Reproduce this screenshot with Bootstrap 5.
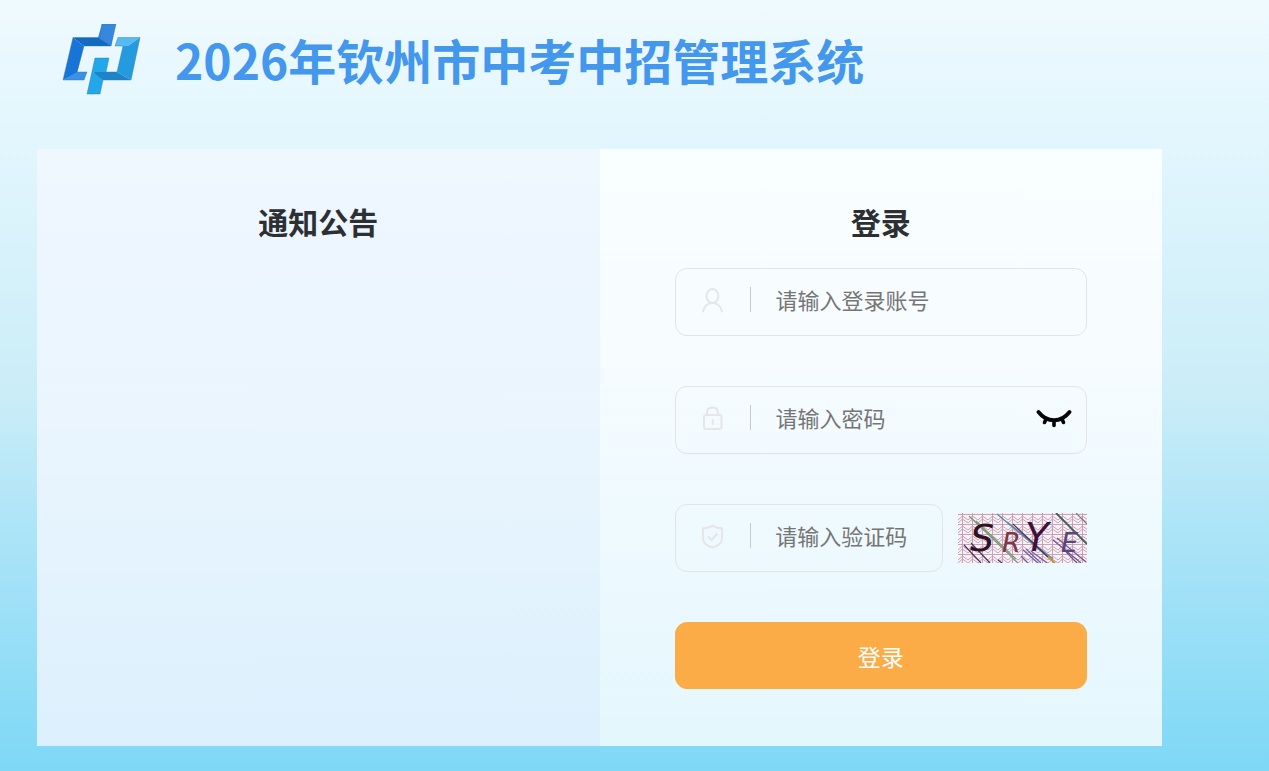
<!DOCTYPE html>
<html lang="zh-CN">
<head>
<meta charset="utf-8">
<meta name="viewport" content="width=device-width, initial-scale=1">
<title>2026年钦州市中考中招管理系统</title>
<link href="https://cdn.jsdelivr.net/npm/bootstrap@5.3.0/dist/css/bootstrap.min.css" rel="stylesheet">
<style>
  body {
    font-family: "Noto Sans CJK SC", sans-serif;
    color: #2c3033;
    background: linear-gradient(180deg, #effaff 0, #e2f6fd 18%, #cbedf8 51%, #ace4f7 69%, #7ed8f6 100%) no-repeat;
  }
  .site-header { padding: 24px 62px; height: 149px; gap: 34px; }
  .site-title { font-size: 48px; line-height: 70px; color: #4397ed; }
  .login-shell { margin: 0 107px 25px 37px; }
  .notice-panel { background: linear-gradient(180deg, #eff7ff, #eaf5fe 45%, #dcf0fd); }
  .login-panel { background: linear-gradient(180deg, #f9feff, #f6fcff 35%, #ecf9fe 72%, #e4f7fd); }
  .panel-pad { padding: 50px 75px 57px; }
  .panel-title { font-size: 30px; line-height: 44px; margin-bottom: 25px; }
  .login-form { gap: 50px; }
  .field-box {
    height: 68px;
    padding: 0 14px 0 24px;
    border: 1px solid #e4e4e4;
    border-radius: 12px;
  }
  .field-box .field-icon { width: 25px; height: 25px; margin-bottom: 4px; }
  .field-divider { width: 1px; height: 25px; margin: 0 25px; margin-bottom: 5px; background: #c9c9c9; }
  .field-input { font-size: 22px; line-height: 34px; color: #333; min-width: 0; outline: 0; margin-bottom: 6px; }
  .field-input::placeholder { color: #757575; opacity: 1; }
  .field-box:focus-within { border-color: #4397ed; }
  .eye-btn { margin-bottom: 4px; }
  .captcha-row { gap: 15px; }
  .captcha-btn { width: 129px; height: 50px; }
  .login-btn {
    height: 67px;
    font-size: 23px;
    line-height: 34px;
    border-radius: 12px;
    --bs-btn-color: #fff;
    --bs-btn-bg: #fbac46;
    --bs-btn-border-color: #fbac46;
    --bs-btn-hover-color: #fff;
    --bs-btn-hover-bg: #f29f34;
    --bs-btn-hover-border-color: #f29f34;
  }
</style>
</head>
<body class="min-vh-100">
<header class="site-header d-flex align-items-start">
  <svg class="flex-shrink-0" width="79" height="71" viewBox="0 0 79 71" aria-hidden="true">
    <path fill="#126bc0" d="M11 13.500H38L40 0H53L49 22H22Z"/>
    <path fill="#3588dd" d="M40 0H54L49 22L36 13.500Z"/>
    <path fill="#1874d6" d="M11 13.500L22 22L15 49L1 56Z"/>
    <path fill="#3a91e6" d="M1 56L15 48H25L22 56Z"/>
    <path fill="#55bbf2" d="M56 13.500H78L66 22H53Z"/>
    <path fill="#249bdf" d="M78 13.500L69 56L55 48L61 22H66Z"/>
    <path fill="#1d84ca" d="M31 48H55L69 56H38Z"/>
    <path fill="#22a7ea" d="M33 34H47L44 48H31L41 56L38 70H25Z"/>
    <path fill="none" stroke="#3578aa" stroke-opacity=".55" stroke-width=".8" d="M11 13.500H38L40 0H54L49 22H22L15 48H25L22 56H1ZM56 13.500H78L69 56H41L38 70H25L33 34H47L44 48H55L61 22H53Z"/>
  </svg>
  <h1 class="site-title fw-bold mb-0">2026年钦州市中考中招管理系统</h1>
</header>

<main class="login-shell">
  <div class="row g-0">
    <section class="col-6 notice-panel panel-pad">
      <h2 class="panel-title text-center fw-bold">通知公告</h2>
    </section>
    <section class="col-6 login-panel panel-pad">
      <h2 class="panel-title text-center fw-bold">登录</h2>
      <form class="login-form d-flex flex-column">
        <div class="field-box d-flex align-items-center">
          <label for="account" class="d-flex" aria-label="登录账号">
            <svg class="field-icon" viewBox="0 0 25 25" fill="none" stroke="#e4e6e7" stroke-width="2" stroke-linecap="round"><ellipse cx="12.500" cy="8" rx="6" ry="7"/><path d="M3 23.500C4 18 8 15 12.500 15S21 18 22 23.500"/></svg>
          </label>
          <span class="field-divider"></span>
          <input id="account" type="text" class="field-input flex-grow-1 border-0 bg-transparent p-0" placeholder="请输入登录账号">
        </div>
        <div class="field-box d-flex align-items-center">
          <label for="password" class="d-flex" aria-label="密码">
            <svg class="field-icon" viewBox="0 0 25 25" fill="none" stroke="#e4e6e7" stroke-width="2" stroke-linecap="round"><rect x="4" y="9" width="17.500" height="14" rx="2"/><path d="M7 9V6.500C7 3.500 9 1.500 12.500 1.500S18 3.500 18 6.500V9M12.700 14V18"/></svg>
          </label>
          <span class="field-divider"></span>
          <input id="password" type="password" class="field-input flex-grow-1 border-0 bg-transparent p-0" placeholder="请输入密码">
          <button type="button" class="eye-btn btn border-0 p-0 d-flex flex-shrink-0" aria-label="显示密码">
            <svg width="36" height="22" viewBox="0 0 36 22" fill="none" stroke="#050505" stroke-linecap="round"><path stroke-width="3.800" d="M2.500 5C11 16 25 16 33.500 5"/><path stroke-width="3.600" d="M10 12L8.500 15.500M18 14V18.500M26 12L27.500 15.500"/></svg>
          </button>
        </div>
        <div class="captcha-row d-flex align-items-center">
          <div class="field-box d-flex align-items-center flex-grow-1">
            <label for="captcha" class="d-flex" aria-label="验证码">
              <svg class="field-icon" viewBox="0 0 25 25" fill="none" stroke="#e4e6e7" stroke-width="2" stroke-linejoin="round"><path d="M12.500 1.500C10 3.500 6 4.200 3 4.200V14C3 18.500 7 22 12.500 23.500C18 22 22 18.500 22 14V4.200C19 4.200 15 3.500 12.500 1.500Z"/><path d="M8 12.500L11.500 16L17.500 9.500"/></svg>
            </label>
            <span class="field-divider"></span>
            <input id="captcha" type="text" class="field-input flex-grow-1 w-100 border-0 bg-transparent p-0" placeholder="请输入验证码">
          </div>
          <button type="button" class="captcha-btn btn border-0 rounded-0 p-0 d-flex flex-shrink-0" aria-label="刷新验证码">
            <svg width="129" height="50" viewBox="0 0 129 50">
              <defs>
                <pattern id="mesh" width="10" height="10" patternUnits="userSpaceOnUse">
                  <rect width="10" height="10" fill="#f8f1f6"/>
                  <path d="M0 1.500H10M4.500 0V10M0 7L4.500 3L10 7M0 10L4.500 6L10 10" fill="none" stroke="#c19ab2" stroke-width=".9"/>
                </pattern>
              </defs>
              <rect width="129" height="50" fill="url(#mesh)"/>
              <g fill="none" stroke-width="1.200">
                <path stroke="#7f9a78" d="M11 3L60 50M18 8L58 46"/>
                <path stroke="#5c8796" d="M39 1L97 50M49 9L95 46"/>
                <path stroke="#4d315f" d="M6 32L23 50M13 30L32 50M55 11L90 44M40 47L44 50"/>
                <path stroke="#7262a5" d="M65 37L80 50M68 36L83 50M73 38L89 50M63 43L70 50"/>
                <path stroke="#77508e" d="M95 27L123 50M99 25L128 49M108 39L119 50"/>
                <path stroke="#405d55" stroke-width="1.800" d="M98 0L129 31"/>
                <path stroke="#777e7a" d="M118 0L129 11"/>
                <path stroke="#c9952c" stroke-width="1.800" d="M90 44L97 50"/>
              </g>
              <g font-family="DejaVu Sans, sans-serif" font-style="italic">
                <text x="12" y="38" font-size="38" fill="#301126">S</text>
                <text x="44" y="39" font-size="27" fill="#803747">R</text>
                <text x="67" y="38" font-size="39" fill="#400f3c">Y</text>
                <text x="103" y="39" font-size="27" fill="#594779">E</text>
              </g>
            </svg>
          </button>
        </div>
        <button type="submit" class="login-btn btn w-100">登录</button>
      </form>
    </section>
  </div>
</main>
<script src="https://cdn.jsdelivr.net/npm/bootstrap@5.3.0/dist/js/bootstrap.bundle.min.js"></script>
</body>
</html>
